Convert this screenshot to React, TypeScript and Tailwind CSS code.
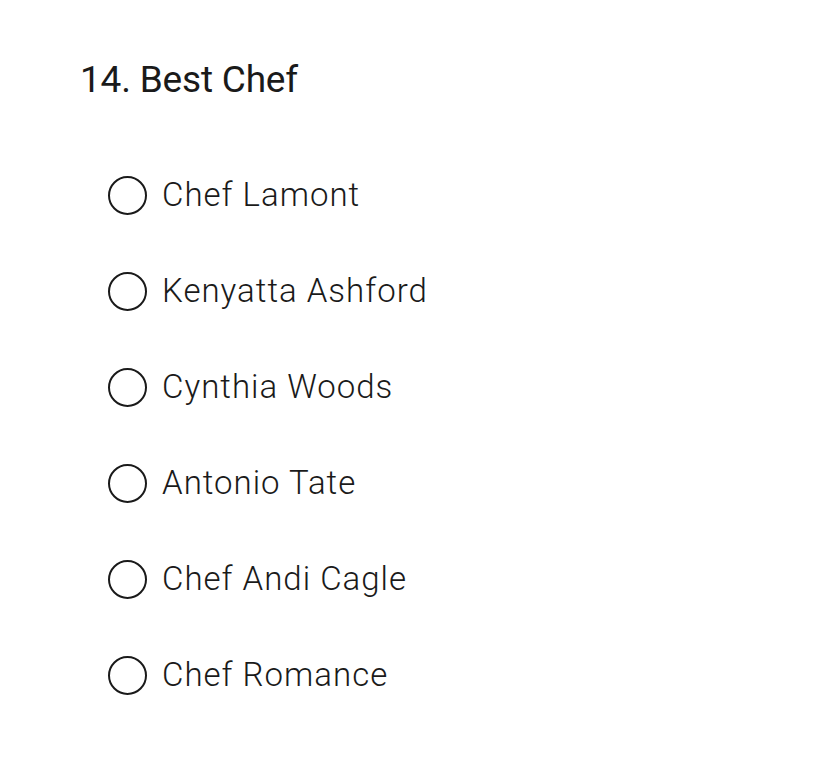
const options = [
  "Chef Lamont",
  "Kenyatta Ashford",
  "Cynthia Woods",
  "Antonio Tate",
  "Chef Andi Cagle",
  "Chef Romance",
];

export default function App() {
  return (
    <main className="min-h-[773px] w-[828px] bg-white font-['Roboto',sans-serif] text-[#1a1a1a]">
      <section className="px-[80px] pt-[58px]">
        <h1 className="text-[37px] leading-[44px] font-normal tracking-[-0.2px]">14. Best Chef</h1>
        <div className="mt-[73px] flex flex-col gap-[56px] pl-[28px]">
          {options.map((option) => (
            <label className="flex h-[40px] items-center gap-[15px]" key={option}>
              <span className="h-[39px] w-[39px] shrink-0 rounded-full border-2 border-[#1a1a1a]" />
              <span className="text-[33px] leading-[40px] font-light tracking-[1px]">{option}</span>
            </label>
          ))}
        </div>
      </section>
    </main>
  );
}
